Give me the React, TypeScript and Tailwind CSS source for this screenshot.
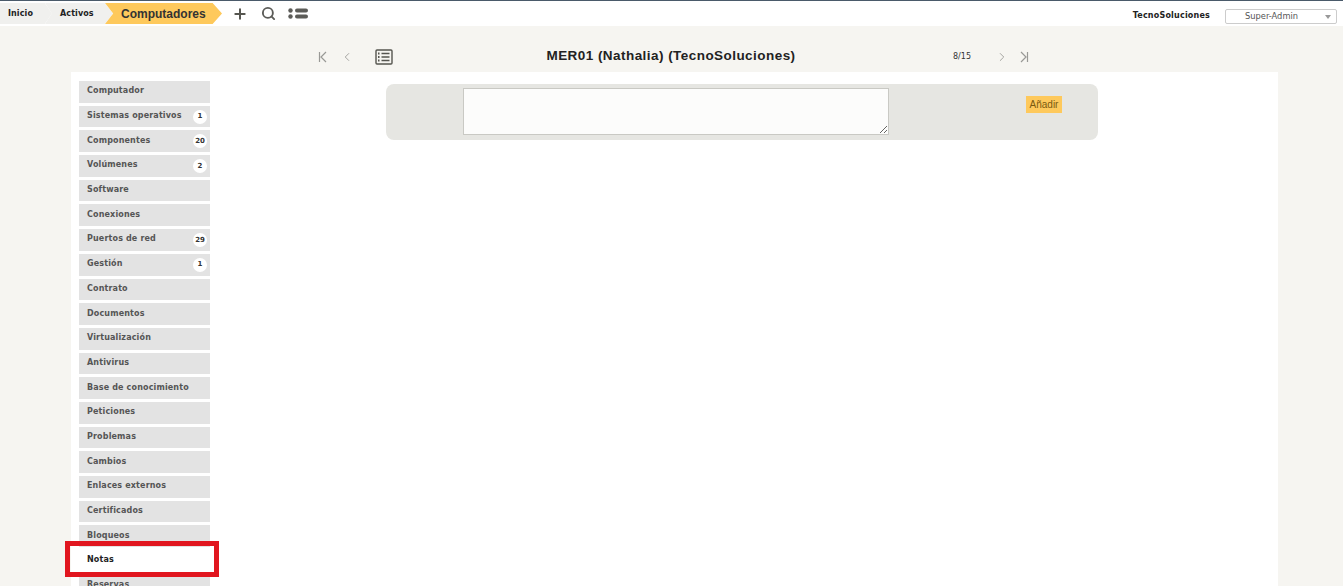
import { ChevronLeft, ChevronRight, Search, Plus } from 'lucide-react';

const TABS: { label: string; count?: string; active?: boolean }[] = [
  { label: 'Computador' },
  { label: 'Sistemas operativos', count: '1' },
  { label: 'Componentes', count: '20' },
  { label: 'Volúmenes', count: '2' },
  { label: 'Software' },
  { label: 'Conexiones' },
  { label: 'Puertos de red', count: '29' },
  { label: 'Gestión', count: '1' },
  { label: 'Contrato' },
  { label: 'Documentos' },
  { label: 'Virtualización' },
  { label: 'Antivirus' },
  { label: 'Base de conocimiento' },
  { label: 'Peticiones' },
  { label: 'Problemas' },
  { label: 'Cambios' },
  { label: 'Enlaces externos' },
  { label: 'Certificados' },
  { label: 'Bloqueos' },
  { label: 'Notas', active: true },
  { label: 'Reservas' },
];

function FirstIcon() {
  return (
    <svg width="10" height="12" viewBox="0 0 10 12" fill="none" stroke="#999996" strokeWidth="1.2">
      <path d="M1.5 1v10M8 1 3 6l5 5" />
    </svg>
  );
}

function LastIcon() {
  return (
    <svg width="10" height="12" viewBox="0 0 10 12" fill="none" stroke="#999996" strokeWidth="1.2">
      <path d="M8.5 1v10M2 1l5 5-5 5" />
    </svg>
  );
}

function ListBoxIcon() {
  return (
    <svg width="18" height="16" viewBox="0 0 18 16" fill="none" stroke="#55554f" strokeWidth="1.4">
      <rect x="1" y="1" width="16" height="14" rx="1" />
      <path d="M6.5 4.5h8M6.5 8h8M6.5 11.500h8" />
      <path d="M3 4.500h1.500M3 8h1.500M3 11.500h1.500" strokeWidth="1.800" />
    </svg>
  );
}

function ListsIcon() {
  return (
    <svg width="20" height="11" viewBox="0 0 20 11" fill="#5c5c58">
      <circle cx="2.500" cy="2.500" r="2.200" />
      <circle cx="2.500" cy="8.500" r="2.200" />
      <rect x="7" y="0.500" width="13" height="4" rx="2" />
      <rect x="7" y="6.500" width="13" height="4" rx="2" />
    </svg>
  );
}

export default function App() {
  return (
    <div className="relative h-[586px] overflow-hidden bg-[#f6f5f1] font-['DejaVu_Sans',sans-serif] text-[#333]">

      {/* top bar */}
      <div className="h-[26px] bg-white">
        <div className="h-[1px] bg-[#4a5a6a]" />
        <div className="flex items-center h-[25px] pr-[6px]">
          <div className="flex h-[21px] items-center">
            <div className="w-[52px] h-full -mr-[7px] bg-[#f0f0ee] [clip-path:polygon(0_0,86%_0,100%_50%,86%_100%,0_100%)] flex items-center pl-[8px] text-[8px] font-bold tracking-[0.1px] text-[#222]">
              Inicio
            </div>
            <div className="w-[68px] h-full -mr-[8px] bg-[#f0f0ee] [clip-path:polygon(0_0,88%_0,100%_50%,88%_100%,0_100%,10%_50%)] flex items-center pl-[15px] text-[8px] font-bold tracking-[0.1px] text-[#222]">
              Activos
            </div>
            <div className="w-[117px] h-full bg-[#fec95c] [clip-path:polygon(0_0,92%_0,100%_50%,92%_100%,0_100%,7%_50%)] flex items-center pl-[16px] font-['Liberation_Sans',sans-serif] text-[12px] font-bold text-[#333]">
              Computadores
            </div>
          </div>
          <Plus className="ml-[10px] w-[16px] h-[16px] text-[#55554f]" strokeWidth={3} />
          <Search className="ml-[13px] w-[15px] h-[15px] text-[#5c5c58]" strokeWidth={3} />
          <div className="ml-[12px] flex"><ListsIcon /></div>
          <span className="ml-auto mt-[5px] text-[8px] font-bold tracking-[0.2px] text-[#222]">TecnoSoluciones</span>
          <div className="ml-[15px] mt-[6px] w-[112px] h-[15px] border border-[#ccc] rounded-[2px] bg-white flex items-center justify-between pl-[19px] pr-[5px] text-[8.300px] text-[#555]">
            Super-Admin
            <span className="w-0 h-0 border-x-[3px] border-x-transparent border-t-[4px] border-t-[#999]" />
          </div>
        </div>
      </div>

      {/* record nav */}
      <div className="h-[46px] relative flex items-center pt-[15px]">
        <div className="ml-[318px] flex items-center">
          <FirstIcon />
          <ChevronLeft className="ml-[12px] w-[14px] h-[14px] text-[#999996]" strokeWidth={1.500} />
          <div className="ml-[21px] flex"><ListBoxIcon /></div>
        </div>
        <h1 className="absolute left-[393px] w-[556px] mt-[-1px] text-center font-['Liberation_Sans',sans-serif] text-[13.500px] font-bold tracking-[0.45px] text-[#222]">
          MER01 (Nathalia) (TecnoSoluciones)
        </h1>
        <div className="ml-[560px] flex items-center">
          <span className="w-[42px] text-[8px] text-[#333]">8/15</span>
          <ChevronRight className="w-[14px] h-[14px] text-[#999996]" strokeWidth={1.500} />
          <div className="ml-[10px] flex"><LastIcon /></div>
        </div>
      </div>

      {/* main panel */}
      <div className="ml-[71px] w-[1207px] h-[600px] bg-white flex">
        <div className="ml-[8px] mt-[9px] w-[131px] flex flex-col gap-[3px] shrink-0">
          {TABS.map((tab) => (
            <div
              key={tab.label}
              className={`h-[21.700px] shrink-0 pl-[8px] pr-[3px] pb-[1px] flex items-center justify-between text-[8px] font-bold tracking-[0.15px] ${
                tab.active ? 'bg-white text-[#222]' : 'bg-[#e3e3e3] text-[#555]'
              }`}
            >
              {tab.label}
              {tab.count && (
                <span className="mt-[1px] w-[14px] h-[14px] rounded-full bg-white flex items-center justify-center text-[7px] tracking-normal text-[#333]">
                  {tab.count}
                </span>
              )}
            </div>
          ))}
        </div>

        {/* notes form */}
        <div className="ml-[176px] mt-[12px] w-[712px] h-[56px] bg-[#e6e6e2] rounded-[8px] flex items-start">
          <textarea
            readOnly
            className="ml-[77px] mt-[4px] w-[426px] h-[47px] bg-[#fcfcfb] border border-[#c9c9c4] outline-none"
          />
          <button className="ml-[137px] mt-[12px] w-[36px] h-[17px] pb-[1px] bg-[#fec95c] font-['Liberation_Sans',sans-serif] text-[10px] text-[#7a5a10]">
            Añadir
          </button>
        </div>
      </div>

      {/* red highlight around the active tab */}
      <div className="absolute left-[65px] top-[541px] w-[154px] h-[36px] border-[5px] border-[#e1161f]" />
    </div>
  );
}
